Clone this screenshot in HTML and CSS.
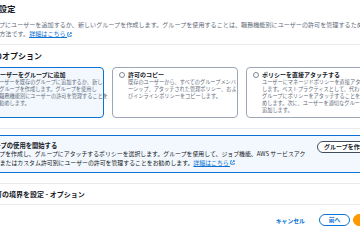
FILE: index.html
```html
<!DOCTYPE html>
<html lang="ja">
<head>
  <meta charset="UTF-8" />
  <title>許可を設定</title>
  <link rel="stylesheet" href="styles.css">
</head>
<body>
  <div class="page">
    <h1 class="title">許可を設定</h1>
    <p class="desc">
      グループにユーザーを追加するか、新しいグループを作成します。グループを使用することは、職務機能別にユーザーの許可を管理するためのベストプラクテ<br>
      ィスの方法です。<a class="link">詳細はこちら <svg class="ext" viewBox="0 0 10 10"><path d="M4 1.5H1.5v7h7V6" /><path d="M6 1.5h2.5V4M8.5 1.5 4.5 5.5" /></svg></a>
    </p>
    <hr class="rule">

    <h2 class="sub">許可のオプション</h2>
    <div class="cards">
      <div class="card selected">
        <span class="radio"></span>
        <div>
          <div class="card-title">ユーザーをグループに追加</div>
          <div class="card-text">ユーザーを既存のグループに追加するか、新し<br>いグループを作成します。グループを使用し<br>て職務機能別にユーザーの許可を管理することを<br>お勧めします。</div>
        </div>
      </div>
      <div class="card">
        <span class="radio"></span>
        <div>
          <div class="card-title">許可のコピー</div>
          <div class="card-text">既存のユーザーから、すべてのグループメンバ<br>ーシップ、アタッチされた管理ポリシー、およ<br>びインラインポリシーをコピーします。</div>
        </div>
      </div>
      <div class="card">
        <span class="radio"></span>
        <div>
          <div class="card-title">ポリシーを直接アタッチする</div>
          <div class="card-text">ユーザーにマネージドポリシーを直接アタッチ<br>します。ベストプラクティスとして、代わりに<br>グループにポリシーをアタッチすることをお勧<br>めします。次に、ユーザーを適切なグループに<br>追加します。</div>
        </div>
      </div>
    </div>
    <hr class="rule rule-low">

    <div class="alert">
      <div class="alert-body">
        <div class="alert-title">グループの使用を開始する</div>
        <div class="alert-text">グループを作成し、グループにアタッチするポリシーを選択します。グループを使用して、ジョブ機能、AWS サービスアク<br>セス、またはカスタム許可別にユーザーの許可を管理することをお勧めします。<a class="link">詳細はこちら <svg class="ext" viewBox="0 0 10 10"><path d="M4 1.5H1.5v7h7V6" /><path d="M6 1.5h2.5V4M8.5 1.5 4.5 5.5" /></svg></a></div>
      </div>
      <button class="btn btn-dark">グループを作成</button>
    </div>

    <div class="boundary">許可の境界を設定 - オプション</div>

    <div class="footer">
      <a class="cancel">キャンセル</a>
      <button class="btn">前へ</button>
      <button class="btn btn-primary">次へ</button>
    </div>
  </div>
</body>
</html>
```

FILE: styles.css
```css
body {
  margin: 0;
  overflow: hidden;
  background: #fff;
  color: #16191f;
  font-family: "Noto Sans CJK JP", "Noto Sans", sans-serif;
}
.page {
  margin-left: -22px;
  width: 407px;
}
.title {
  margin: 2px 0 0 -5px;
  font-size: 8.5px;
  line-height: 12px;
  font-weight: 700;
}
.desc {
  margin: 6px 0 0 3px;
  font-size: 6.1px;
  line-height: 9px;
  color: #5f6b7a;
  white-space: nowrap;
}
.link {
  color: #0972d3;
  text-decoration: underline;
  text-underline-offset: 1px;
}
.ext {
  width: 5px;
  height: 5px;
  fill: none;
  stroke: #0972d3;
  stroke-width: 1.6;
  vertical-align: -0.5px;
}
.rule {
  margin: 6px 0 0;
  height: 0;
  border: 0;
  border-top: 1px solid #e9ebed;
}
.rule-low {
  margin-top: 10px;
}
.sub {
  margin: 6px 0 0;
  font-size: 8px;
  line-height: 10px;
  font-weight: 700;
}

/* option cards */
.cards {
  display: grid;
  grid-template-columns: repeat(3, 126px);
  gap: 8px;
  margin-top: 6px;
}
.card {
  display: flex;
  gap: 3px;
  padding: 3px 3px 4px 6px;
  border: 1px solid #9ba7b6;
  border-radius: 4px;
}
.card.selected {
  background: #f2f8fd;
  border-color: #0972d3;
}
.radio {
  flex: none;
  box-sizing: border-box;
  width: 6px;
  height: 6px;
  margin-top: 1px;
  border: 1px solid #7d8998;
  border-radius: 50%;
  background: #fff;
}
.selected .radio {
  border: 2px solid #0972d3;
}
.card-title {
  font-size: 6px;
  line-height: 7px;
  font-weight: 700;
}
.card-text {
  font-size: 5.2px;
  line-height: 7px;
  color: #5f6b7a;
  white-space: nowrap;
}

/* info alert */
.alert {
  display: flex;
  align-items: flex-start;
  width: 401px;
  box-sizing: border-box;
  margin-top: 6px;
  padding: 6px 5px 5px 3px;
  background: #f2f8fd;
  border: 1px solid #0972d3;
  border-radius: 4px;
}
.alert-body {
  flex: 0 0 330px;
  white-space: nowrap;
}
.alert-title {
  font-size: 6.3px;
  line-height: 8px;
  font-weight: 700;
}
.alert-text {
  font-size: 5.9px;
  line-height: 8.5px;
}
.btn {
  padding: 0 9px;
  font-family: inherit;
  font-size: 5.8px;
  line-height: 10px;
  font-weight: 700;
  color: #0972d3;
  background: #fff;
  border: 1px solid #0972d3;
  border-radius: 8px;
}
.btn-dark {
  margin: -1px 0 0 5px;
  padding: 0 6px;
  font-size: 6px;
  color: #16191f;
  border-color: #414d5c;
}
.btn-primary {
  color: #16191f;
  background: #ff9900;
  border-color: #ff9900;
}

.boundary {
  margin-top: 10px;
  padding: 6px 0 5px 10px;
  font-size: 7px;
  line-height: 9px;
  font-weight: 700;
  border-top: 1px solid #e9ebed;
  border-bottom: 1px solid #e9ebed;
}
.footer {
  display: flex;
  justify-content: flex-end;
  align-items: center;
  gap: 3px;
  margin-top: 9px;
}
.cancel {
  margin-right: 11px;
  font-size: 5.8px;
  font-weight: 700;
  color: #0972d3;
}
```
